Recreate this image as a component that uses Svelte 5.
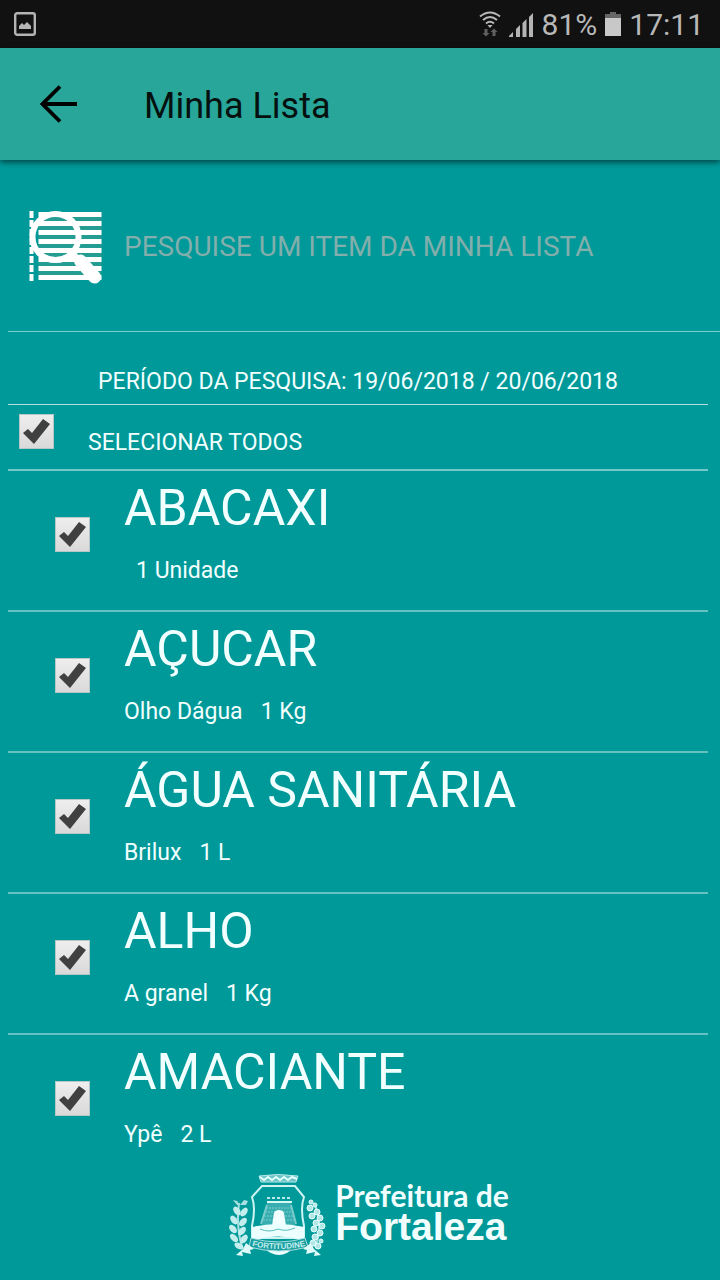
<script lang="ts">
    type Item = { name: string; brand: string; amount: string; checked: boolean };

    let search = $state("");
    let items = $state<Item[]>([
        { name: "ABACAXI", brand: "", amount: "1 Unidade", checked: true },
        { name: "AÇUCAR", brand: "Olho Dágua", amount: "1 Kg", checked: true },
        { name: "ÁGUA SANITÁRIA", brand: "Brilux", amount: "1 L", checked: true },
        { name: "ALHO", brand: "A granel", amount: "1 Kg", checked: true },
        { name: "AMACIANTE", brand: "Ypê", amount: "2 L", checked: true },
    ]);

    let visible = $derived(items.filter(i => i.name.includes(search.toUpperCase())));
    let allChecked = $derived(items.every(i => i.checked));

    const toggleAll = () => {
        const next = !allChecked;
        items.forEach(i => (i.checked = next));
    }

    // laurel leaves on the left of the crest: x, y, angle
    const leaves = [
        [13, 46, -35], [20, 47, 35], [10, 55, -35], [19, 57, 40],
        [9, 64, -40], [18, 66, 40], [10, 73, -45], [20, 74, 35], [15, 81, -60],
    ];

    // berries and blossoms on the right: x, y, radius
    const blossoms = [
        [87, 37, 2], [91, 40, 2], [86, 43, 3], [93, 47, 3], [88, 51, 3], [96, 53, 3],
        [92, 58, 3], [98, 61, 3], [90, 64, 3], [96, 68, 3], [91, 72, 3], [97, 76, 2],
        [89, 78, 3], [94, 81, 3],
    ];
</script>

<div class="status">
    <svg width="22" height="24" viewBox="0 0 22 24" aria-hidden="true">
        <rect x="1.2" y="1.2" width="19.6" height="21.6" rx="2" fill="none" stroke="#b4b4b4" stroke-width="2.4" />
        <path d="M5 17v-3l3-3 2 2 3-3 4 4v3z" fill="#b4b4b4" />
    </svg>
    <div class="status-right">
        <svg width="22" height="26" viewBox="0 0 22 26" aria-hidden="true">
            <g fill="none" stroke="#b8b8b8" stroke-width="2">
                <path d="M1 5.500Q11-2.500 21 5.500" />
                <path d="M4 9Q11 3 18 9" />
                <path d="M7 12.500Q11 9 15 12.500" />
            </g>
            <path d="M8.500 14h5L11 17z" fill="#b8b8b8" />
            <path d="M5.500 18h3v4h2l-3.500 3.500L3.500 22h2zM13.500 25h3v-4h2L15 17.500 11.500 21h2z" fill="#606060" />
        </svg>
        <svg width="25" height="25" viewBox="0 0 25 25" aria-hidden="true">
            <path d="M0 25v-1l4-4v5zM7 25v-8l4-4v12zM13.500 25V11l4-4v18zM20 25V5l4-4v24z" fill="#b4b4b4" />
        </svg>
        <span class="percent">81%</span>
        <svg width="16" height="24" viewBox="0 0 16 24" aria-hidden="true">
            <path d="M5 0h6v2h5v4H0V2h5z" fill="#666" />
            <path d="M0 6h16v18H0z" fill="#c8c8c8" />
        </svg>
        <span class="clock">17:11</span>
    </div>
</div>

<header class="app-bar">
    <button class="back-btn" aria-label="Voltar">
        <svg width="38" height="38" viewBox="0 0 38 38" aria-hidden="true">
            <path d="M20 1.500 2.500 19 20 36.500M2.500 19H37" fill="none" stroke="#000" stroke-width="3.800" />
        </svg>
    </button>
    <h1>Minha Lista</h1>
</header>

<main>
    <form class="search" onsubmit={e => e.preventDefault()}>
        <label for="search" aria-label="Pesquisar">
            <svg width="76" height="74" viewBox="0 0 75 74" aria-hidden="true">
                <rect x="10" y="2" width="63" height="67" fill="#259d92" />
                <g fill="#fff">
                    {#each [1, 10, 19, 28, 37, 46, 55, 64] as y}
                        <rect x="1" {y} width="4" height="7" />
                        <rect x="10" y={y + 1} width="63" height="5" />
                    {/each}
                </g>
                <path d="M45 44 66 67" stroke="#fff" stroke-width="6" />
                <path d="M52 51 66 67" stroke="#fff" stroke-width="13" stroke-linecap="round" />
                <circle cx="27" cy="27" r="23" fill="none" stroke="#fff" stroke-width="6" />
            </svg>
        </label>
        <input id="search" type="text" placeholder="PESQUISE UM ITEM DA MINHA LISTA" bind:value={search} />
    </form>

    <p class="period">PERÍODO DA PESQUISA: 19/06/2018 / 20/06/2018</p>

    <label class="select-all">
        <input class="check" type="checkbox" checked={allChecked} onchange={toggleAll} />
        <span>SELECIONAR TODOS</span>
    </label>

    <ul>
        {#each visible as item (item.name)}
            <li>
                <label class="item">
                    <input class="check" type="checkbox" bind:checked={item.checked} />
                    <span class="item-text">
                        <span class="name">{item.name}</span>
                        <span class="detail">
                            <span>{item.brand}</span>
                            <span>{item.amount}</span>
                        </span>
                    </span>
                </label>
            </li>
        {/each}
    </ul>
</main>

<footer>
    <svg width="101" height="82" viewBox="3 9 101 82" aria-hidden="true">
        <!-- crown -->
        <path d="M35 11q19-3 39 0l-2 6H37z" fill="#6cc4c5" stroke="#b8e9e9" />
        <path d="M36 12l4 3 4-3 4 3 4-3 4 3 4-3 4 3 4-3 5 2" fill="none" stroke="#e4ffff" stroke-width="2" />
        <!-- shield -->
        <path d="M38 21h33l9 11q-4 11 0 29v12H28V61q4-18 0-29z" fill="none" stroke="#cdf3f3" stroke-width="2" />
        <path d="M43 38h24l4 22H38z" fill="#39aeb0" />
        <g fill="none" stroke="#7ccbcc">
            <path d="M43 40 37 59M67 40l5 19" stroke-width="2" />
            <path d="M42 43h26M41 47h28M40 51h30M39 55h32" stroke-dasharray="2 1" />
        </g>
        <path d="M43 33h25" stroke="#b8e9e9" stroke-width="2" stroke-dasharray="3 2" />
        <path d="M43 37h25" stroke="#d8f8f8" stroke-width="2" />
        <path d="M48 61 50 48q1-3 5-3t5 3l2 13z" fill="#f2ffff" />
        <path d="M28 62q26-6 52 0v13q-26-7-52 0z" fill="#ecffff" />
        <path d="M36 64q9 4 18 0 8 3 17-1" fill="none" stroke="#5dbcbe" />
        <!-- ribbon -->
        <path d="M40 83q15 3 29 0-6 7-14 7t-15-7z" fill="#ecffff" />
        <path d="M27 73q28 8 54 0l3 9q-29 8-59 0z" fill="#1b9fa0" stroke="#a8dfe0" />
        <path id="motto" d="M28 81q27 6 53 0" fill="none" />
        <text class="motto">
            <textPath href="#motto">FORTITUDINE</textPath>
        </text>
        <path d="M22 78l8 6-4 1 1 4-9-2 1 4-7-1 7-6zM87 78l-8 6 4 1-1 4 9-2-1 4 7-1-7-6z" fill="#e0fafa" />
        <!-- laurel -->
        <path d="M15 38q-3 24 3 44M90 38q10 22 1 44" fill="none" stroke="#a8dfe0" stroke-width="2" />
        <path d="M9 35l4 1 3 4 4-5 4 1-2 4h-9z" fill="#a9dfe0" />
        {#each leaves as [x, y, angle]}
            <ellipse cx={x} cy={y} rx="3" ry="5" transform="rotate({angle} {x} {y})" fill="#c4eeee" />
        {/each}
        {#each blossoms as [x, y, r]}
            <circle cx={x} cy={y} {r} fill="#b4e6e6" stroke="#e4ffff" />
        {/each}
    </svg>
    <div class="brand">
        <span class="brand-top">Prefeitura de</span>
        <span class="brand-bottom">Fortaleza</span>
    </div>
</footer>

<style>
    :global(body) {
        margin: 0;
        background: #009999;
        color: #f2ffff;
        font-family: Roboto, "Liberation Sans", sans-serif;
    }

    .status {
        display: flex;
        align-items: center;
        justify-content: space-between;
        height: 48px;
        padding: 0 16px 0 14px;
        background: #111;
        color: #b8b8b8;
        font-size: 30px;
    }

    .status-right {
        display: flex;
        align-items: center;
        gap: 8px;
    }

    .status svg {
        display: block;
    }

    .app-bar {
        display: flex;
        align-items: center;
        gap: 66px;
        height: 112px;
        padding: 0 40px;
        background: #27a699;
        box-shadow: 0 2px 6px rgba(0, 0, 0, .6);
    }

    .back-btn {
        padding: 0;
        border: none;
        background: none;
    }

    .back-btn svg {
        display: block;
    }

    h1 {
        margin: 0;
        padding-top: 4px;
        color: #06110f;
        font-size: 36px;
        font-weight: 400;
    }

    main {
        padding-left: 8px;
    }

    .search {
        display: flex;
        align-items: center;
        gap: 20px;
        height: 169px;
        padding: 2px 0 0 20px;
        border-bottom: 1px solid #7fcccc;
    }

    .search svg {
        display: block;
    }

    .search input {
        flex: 1;
        min-width: 0;
        padding: 0;
        border: none;
        outline: none;
        background: none;
        color: #fff;
        font: 28px Roboto, "Liberation Sans", sans-serif;
    }

    .search input::placeholder {
        color: #82aeac;
        opacity: 1;
    }

    .period {
        margin: 0 12px 0 0;
        padding: 35px 0 7px;
        border-bottom: 1px solid #b2e0e0;
        font-size: 23px;
        line-height: 30px;
        text-align: center;
    }

    .check {
        flex: none;
        appearance: none;
        width: 35px;
        height: 35px;
        margin: 0;
        border: 1px solid #b5c8c8;
        background: linear-gradient(#eee, #d9d9d9);
    }

    .check:checked::before {
        content: "";
        display: block;
        width: 33px;
        height: 33px;
        background: #404040;
        clip-path: polygon(3px 18px, 8px 14px, 12px 18px, 23px 4px, 30px 9px, 14px 29px);
    }

    .select-all {
        display: flex;
        gap: 34px;
        height: 64px;
        margin-right: 12px;
        padding-left: 11px;
        border-bottom: 2px solid #73c9c9;
        font-size: 23px;
    }

    .select-all .check {
        margin-top: 9px;
    }

    .select-all span {
        margin-top: 23px;
        line-height: 30px;
    }

    ul {
        margin: 0 12px 0 0;
        padding: 0;
        list-style: none;
    }

    li {
        border-bottom: 2px solid #66c2c2;
    }

    li:last-child {
        border-bottom: none;
    }

    .item {
        display: flex;
        gap: 34px;
        height: 139px;
        padding-left: 47px;
    }

    .item .check {
        margin-top: 46px;
    }

    .item-text {
        display: flex;
        flex-direction: column;
        gap: 18px;
        padding-top: 7px;
    }

    .name {
        font-size: 50px;
        line-height: 60px;
    }

    .detail {
        display: flex;
        gap: 18px;
        font-size: 23px;
        line-height: 30px;
    }

    .detail span:empty {
        margin-right: -6px;
    }

    footer {
        display: flex;
        justify-content: center;
        gap: 7px;
        padding: 0 0 20px 16px;
    }

    .motto {
        fill: #c4eeee;
        font: 700 8px "Liberation Sans", sans-serif;
    }

    .brand {
        display: flex;
        flex-direction: column;
        padding-top: 5px;
        color: #f2ffff;
        font-weight: 700;
    }

    .brand-top {
        font-family: Lato, sans-serif;
        font-size: 30px;
        line-height: 32px;
    }

    .brand-bottom {
        font-family: "Liberation Sans", sans-serif;
        font-size: 39px;
        line-height: 32px;
    }
</style>
